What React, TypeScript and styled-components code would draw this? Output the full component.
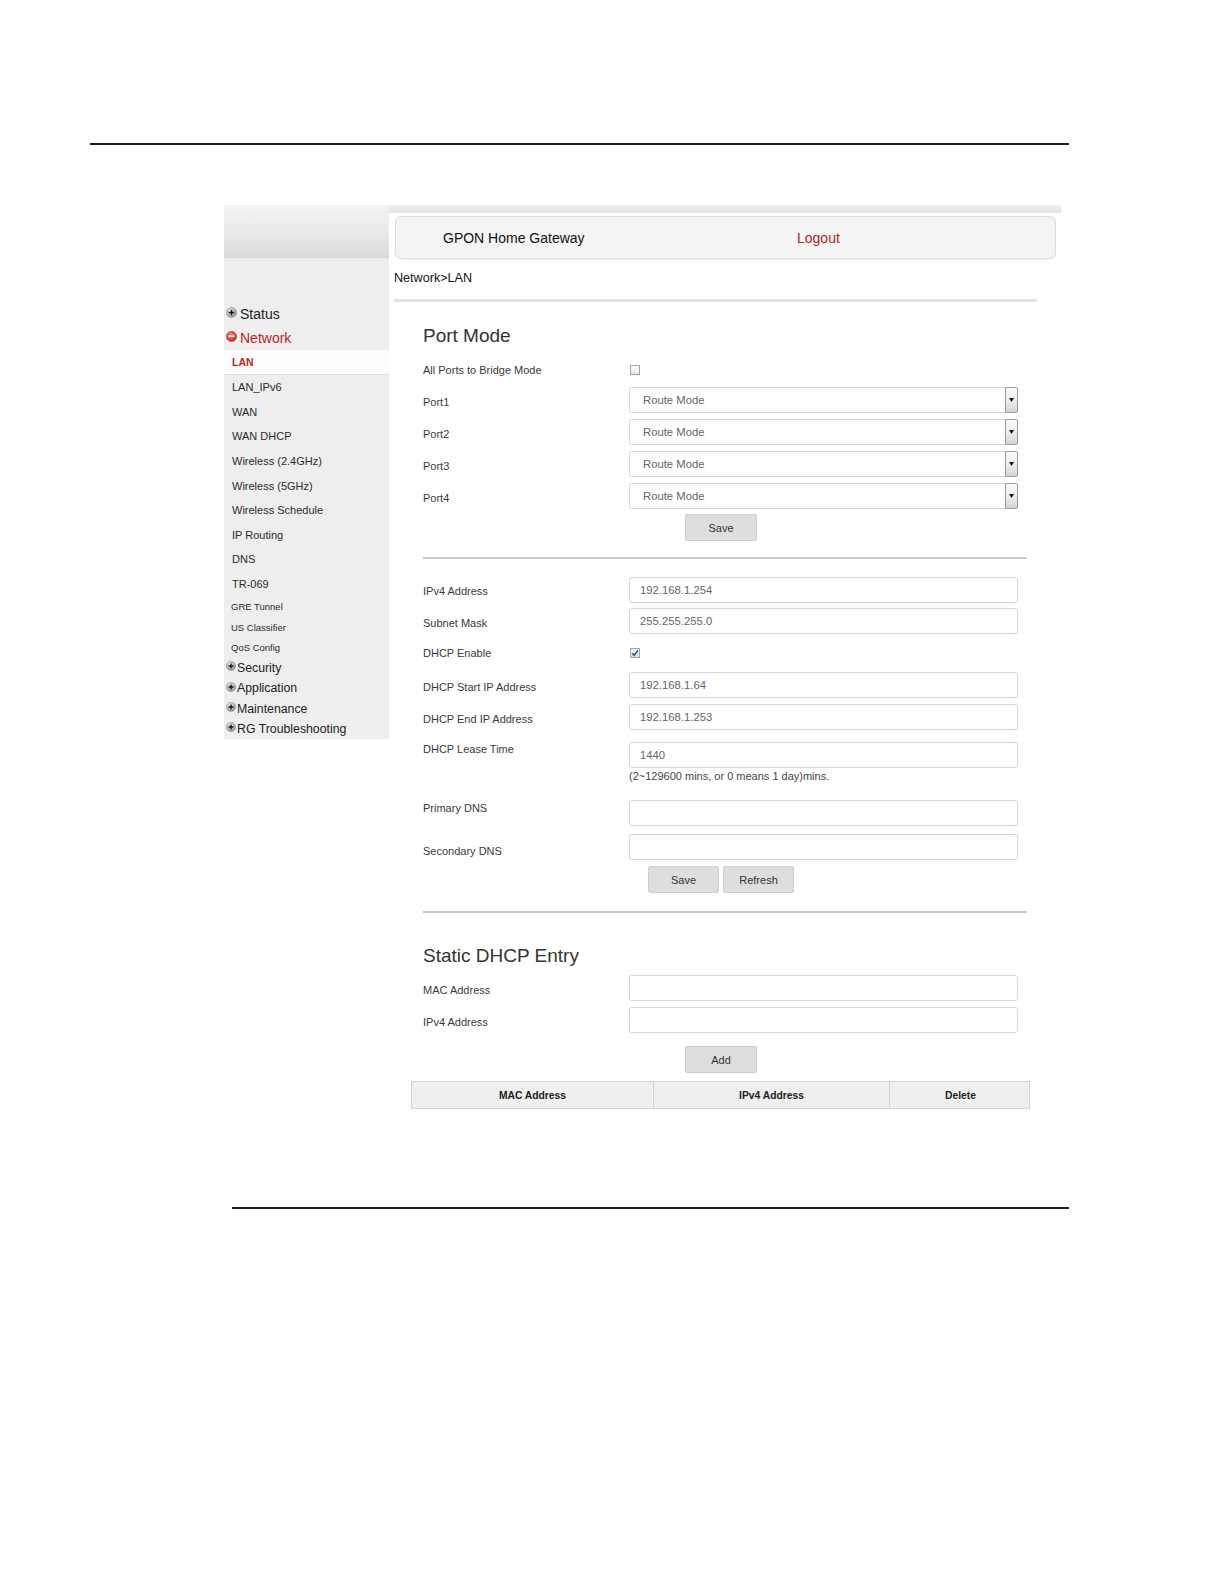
import React from 'react';
import styled, { createGlobalStyle } from 'styled-components';

const Global = createGlobalStyle`
  html, body { margin: 0; padding: 0; background: #ffffff; overflow: hidden; }
  body { font-family: "Liberation Sans", Arial, sans-serif; color: #333; }
  * { box-sizing: border-box; }
`;

const Page = styled.div`
  padding-top: 143px;
`;

const Rule = styled.div<{ $left: number; $width: number; $mt: number }>`
  margin-left: ${p => p.$left}px;
  margin-top: ${p => p.$mt}px;
  width: ${p => p.$width}px;
  height: 2px;
  background: #1e1e1e;
`;

const Shot = styled.div`
  display: flex;
  align-items: flex-start;
  margin-top: 60px;
  margin-left: 224px;
  width: 837px;
`;

/* ---------- Sidebar ---------- */
const Sidebar = styled.aside`
  width: 165px;
  flex-shrink: 0;
  display: flex;
  flex-direction: column;
`;

const SideHead = styled.div`
  height: 53px;
  background: linear-gradient(#f3f3f3 0%, #e9e9e9 55%, #d9d9d9 100%);
`;

const SideMenu = styled.nav`
  background: #eeeeee;
  padding-top: 44px;
  display: flex;
  flex-direction: column;
`;

const TopItem = styled.div<{ $h: number; $fs: number; $red?: boolean; $gap: number }>`
  height: ${p => p.$h}px;
  display: flex;
  align-items: center;
  gap: ${p => p.$gap}px;
  padding-left: 2px;
  font-size: ${p => p.$fs}px;
  color: ${p => (p.$red ? '#b8281d' : '#222')};
  svg { flex-shrink: 0; margin-top: -3px; }
`;

const SubItem = styled.div<{ $h: number; $fs: number; $active?: boolean; $pl: number }>`
  height: ${p => p.$h}px;
  display: flex;
  align-items: center;
  padding-left: ${p => p.$pl}px;
  font-size: ${p => p.$fs}px;
  font-weight: ${p => (p.$active ? 700 : 400)};
  color: ${p => (p.$active ? '#b8281d' : '#2b2b2b')};
  background: ${p => (p.$active ? '#fdfdfd' : 'transparent')};
  border-bottom: ${p => (p.$active ? '1px solid #e2e2e2' : 'none')};
`;

/* ---------- Main ---------- */
const Main = styled.main`
  flex: 1;
  display: flex;
  flex-direction: column;
`;

const TopStrip = styled.div`
  height: 8px;
  background: linear-gradient(#f0f0f0, #e4e4e4);
`;

const HeaderBox = styled.header`
  margin: 3px 5px 0 6px;
  height: 43px;
  border: 1px solid #dcdcdc;
  border-radius: 6px;
  background: #f4f4f4;
  box-shadow: 0 1px 1px rgba(0, 0, 0, 0.04);
  display: flex;
  align-items: center;
  padding-left: 47px;
  font-size: 14px;
  color: #111;
`;

const HeaderTitle = styled.span`
  width: 354px;
  flex-shrink: 0;
`;

const Logout = styled.span`
  color: #a8281e;
`;

const Breadcrumb = styled.div`
  margin: 12px 0 0 5px;
  font-size: 12.6px;
  line-height: 15px;
  color: #111;
`;

const TopSeparator = styled.div`
  margin: 13px 0 0 5px;
  width: 643px;
  height: 3px;
  background: #e2e2e2;
`;

const Content = styled.section`
  padding-left: 34px;
  display: flex;
  flex-direction: column;
`;

const Heading = styled.h2<{ $mt: number }>`
  margin: ${p => p.$mt}px 0 0;
  font-size: 19px;
  line-height: 22px;
  font-weight: 400;
  color: #333;
`;

const Row = styled.div<{ $mt: number; $center?: boolean; $h?: number }>`
  display: flex;
  align-items: ${p => (p.$center ? 'center' : 'flex-start')};
  margin-top: ${p => p.$mt}px;
  ${p => (p.$h ? `height: ${p.$h}px;` : '')}
`;

const Label = styled.div<{ $pt?: number }>`
  width: 206px;
  flex-shrink: 0;
  font-size: 11px;
  line-height: 13px;
  padding-top: ${p => p.$pt ?? 0}px;
  color: #3a3a3a;
`;

const Control = styled.div`
  display: flex;
  flex-direction: column;
`;

const TextInput = styled.input`
  width: 389px;
  height: 26px;
  border: 1px solid #d6d6d6;
  border-radius: 3px;
  background: #ffffff;
  padding: 0 0 0 10px;
  font-family: "Liberation Sans", Arial, sans-serif;
  font-size: 11.3px;
  color: #666;
  outline: none;
`;

const SelectBox = styled.div`
  width: 389px;
  height: 26px;
  border: 1px solid #d6d6d6;
  border-radius: 3px;
  background: #ffffff;
  display: flex;
  align-items: center;
  font-size: 11.3px;
  color: #666;
`;

const SelectText = styled.span`
  flex: 1;
  padding-left: 13px;
`;

const SelectArrow = styled.span`
  width: 13px;
  height: 26px;
  margin: -1px -1px -1px 0;
  border: 1px solid #9d9d9d;
  border-radius: 0 2px 2px 0;
  background: linear-gradient(#fbfbfb 0%, #ececec 55%, #d3d3d3 100%);
  display: flex;
  align-items: center;
  justify-content: center;
`;

const Box = styled.span<{ $checked?: boolean }>`
  width: 10px;
  height: 10px;
  margin-left: 1px;
  border: 1px solid #a5a5a5;
  background: ${p => (p.$checked ? 'linear-gradient(#eef3fb, #d7e1f0)' : 'linear-gradient(#fdfdfd, #e6e6e6)')};
  display: flex;
  align-items: center;
  justify-content: center;
`;

const Hint = styled.div`
  margin-top: 2px;
  font-size: 11px;
  line-height: 13px;
  color: #444;
`;

const ButtonRow = styled.div<{ $mt: number }>`
  width: 596px;
  margin-top: ${p => p.$mt}px;
  display: flex;
  justify-content: center;
  gap: 4px;
`;

const Button = styled.button<{ $w: number }>`
  width: ${p => p.$w}px;
  height: 27px;
  padding: 0;
  border: 1px solid #cfcfcf;
  border-radius: 2px;
  background: #dedede;
  font-family: "Liberation Sans", Arial, sans-serif;
  font-size: 11px;
  color: #333;
`;

const Divider = styled.hr<{ $mt: number }>`
  margin: ${p => p.$mt}px 0 0;
  width: 604px;
  height: 2px;
  border: none;
  background: #c9c9d3;
`;

const Table = styled.div`
  margin: 8px 0 0 -12px;
  width: 619px;
  height: 28px;
  display: grid;
  grid-template-columns: 242px 236px 141px;
  border: 1px solid #d3d3d3;
  background: #efefef;
`;

const Th = styled.div<{ $last?: boolean }>`
  display: flex;
  align-items: center;
  justify-content: center;
  font-size: 10.3px;
  font-weight: 700;
  color: #222;
  border-right: ${p => (p.$last ? 'none' : '1px solid #d3d3d3')};
`;

/* ---------- Icons ---------- */
const PlusIcon: React.FC<{ size: number }> = ({ size }) => (
  <svg width={size} height={size} viewBox="0 0 12 12">
    <defs>
      <radialGradient id="pg" cx="40%" cy="35%" r="70%">
        <stop offset="0%" stopColor="#f4f4f4" />
        <stop offset="100%" stopColor="#8c8c8c" />
      </radialGradient>
    </defs>
    <circle cx="6" cy="6" r="5.5" fill="url(#pg)" stroke="#8a8a8a" strokeWidth="0.6" />
    <path d="M3 6h6M6 3v6" stroke="#111" strokeWidth="1.6" />
  </svg>
);

const MinusIcon: React.FC<{ size: number }> = ({ size }) => (
  <svg width={size} height={size} viewBox="0 0 12 12">
    <defs>
      <radialGradient id="mg" cx="40%" cy="35%" r="70%">
        <stop offset="0%" stopColor="#ff8a80" />
        <stop offset="100%" stopColor="#c3221a" />
      </radialGradient>
    </defs>
    <circle cx="6" cy="6" r="5.5" fill="url(#mg)" stroke="#a51b14" strokeWidth="0.6" />
    <path d="M2.8 5.6h6.4" stroke="#ffffff" strokeWidth="1.8" />
  </svg>
);

const Caret = () => (
  <svg width="5" height="4" viewBox="0 0 5 4">
    <path d="M0 0h5L2.5 4z" fill="#111" />
  </svg>
);

const Check = () => (
  <svg width="8" height="8" viewBox="0 0 8 8">
    <path d="M1.2 4.2l2 2.2L7 1.2" fill="none" stroke="#2b4f8f" strokeWidth="1.5" />
  </svg>
);

/* ---------- Data ---------- */
const networkSubs = [
  'LAN_IPv6', 'WAN', 'WAN DHCP', 'Wireless (2.4GHz)', 'Wireless (5GHz)',
  'Wireless Schedule', 'IP Routing', 'DNS', 'TR-069',
];
const smallSubs = ['GRE Tunnel', 'US Classifier', 'QoS Config'];
const bottomTops = ['Security', 'Application', 'Maintenance', 'RG Troubleshooting'];
const ports = ['Port1', 'Port2', 'Port3', 'Port4'];

const Field: React.FC<{ label: string; value?: string; mt: number; pt: number; hint?: string }> = ({ label, value = '', mt, pt, hint }) => (
  <Row $mt={mt}>
    <Label $pt={pt}>{label}</Label>
    <Control>
      <TextInput readOnly value={value} />
      {hint && <Hint>{hint}</Hint>}
    </Control>
  </Row>
);

export default function App() {
  return (
    <Page>
      <Global />
      <Rule $left={90} $width={979} $mt={0} />
      <Shot>
        <Sidebar>
          <SideHead />
          <SideMenu>
            <TopItem $h={24} $fs={14} $gap={3}><PlusIcon size={11} />Status</TopItem>
            <TopItem $h={24} $fs={14} $gap={3} $red><MinusIcon size={11} />Network</TopItem>
            <SubItem $h={25} $fs={10.5} $pl={8} $active>LAN</SubItem>
            {networkSubs.map(s => (
              <SubItem key={s} $h={24.6} $fs={11} $pl={8}>{s}</SubItem>
            ))}
            {smallSubs.map(s => (
              <SubItem key={s} $h={20.5} $fs={9.5} $pl={7}>{s}</SubItem>
            ))}
            {bottomTops.map(s => (
              <TopItem key={s} $h={20.3} $fs={12.3} $gap={1}><PlusIcon size={10} />{s}</TopItem>
            ))}
          </SideMenu>
        </Sidebar>

        <Main>
          <TopStrip />
          <HeaderBox>
            <HeaderTitle>GPON Home Gateway</HeaderTitle>
            <Logout>Logout</Logout>
          </HeaderBox>
          <Breadcrumb>Network&gt;LAN</Breadcrumb>
          <TopSeparator />

          <Content>
            <Heading $mt={23}>Port Mode</Heading>
            <Row $mt={13} $center $h={20}>
              <Label>All Ports to Bridge Mode</Label>
              <Box />
            </Row>
            {ports.map((p, i) => (
              <Row key={p} $mt={i === 0 ? 7 : 6}>
                <Label $pt={8.5}>{p}</Label>
                <SelectBox>
                  <SelectText>Route Mode</SelectText>
                  <SelectArrow><Caret /></SelectArrow>
                </SelectBox>
              </Row>
            ))}
            <ButtonRow $mt={5}>
              <Button $w={72}>Save</Button>
            </ButtonRow>

            <Divider $mt={16} />

            <Field label="IPv4 Address" value="192.168.1.254" mt={18} pt={7.5} />
            <Field label="Subnet Mask" value="255.255.255.0" mt={5} pt={8.5} />
            <Row $mt={6} $center $h={26}>
              <Label>DHCP Enable</Label>
              <Box $checked><Check /></Box>
            </Row>
            <Field label="DHCP Start IP Address" value="192.168.1.64" mt={6} pt={8.5} />
            <Field label="DHCP End IP Address" value="192.168.1.253" mt={6} pt={8.5} />
            <Field
              label="DHCP Lease Time"
              value="1440"
              mt={12}
              pt={0.5}
              hint="(2~129600 mins, or 0 means 1 day)mins."
            />
            <Field label="Primary DNS" mt={17} pt={1.5} />
            <Field label="Secondary DNS" mt={8} pt={10.5} />
            <ButtonRow $mt={6}>
              <Button $w={71}>Save</Button>
              <Button $w={71}>Refresh</Button>
            </ButtonRow>

            <Divider $mt={18} />

            <Heading $mt={32}>Static DHCP Entry</Heading>
            <Field label="MAC Address" mt={8} pt={8.5} />
            <Field label="IPv4 Address" mt={6} pt={8.5} />
            <ButtonRow $mt={13}>
              <Button $w={72}>Add</Button>
            </ButtonRow>
            <Table>
              <Th>MAC Address</Th>
              <Th>IPv4 Address</Th>
              <Th $last>Delete</Th>
            </Table>
          </Content>
        </Main>
      </Shot>
      <Rule $left={232} $width={837} $mt={98} />
    </Page>
  );
}
